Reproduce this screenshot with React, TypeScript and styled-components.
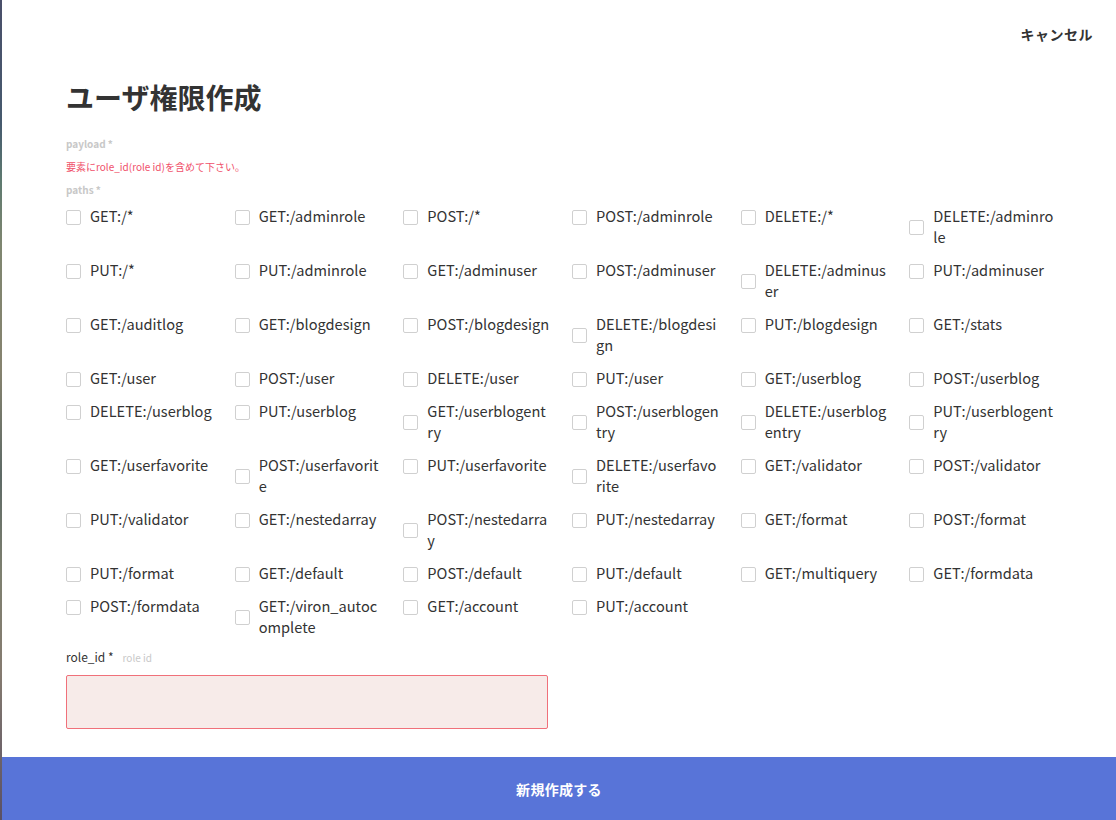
import React from "react";
import styled, { createGlobalStyle } from "styled-components";

const GlobalStyle = createGlobalStyle`
  html, body { margin: 0; padding: 0; background: #fff; }
  body { font-family: "Noto Sans CJK JP", "Noto Sans", sans-serif; color: #333; }
  * { box-sizing: border-box; }
`;

const Page = styled.div`
  display: flex;
  width: 1116px;
  height: 820px;
  overflow: hidden;
`;

const Backdrop = styled.div`
  width: 2px;
  flex: none;
  background: linear-gradient(
    to bottom,
    #4a4f6a 0%,
    #465a6e 15%,
    #5e7a70 22%,
    #7f8670 30%,
    #86836f 45%,
    #5e6a66 58%,
    #7e8070 70%,
    #857b70 82%,
    #5a5064 100%
  );
`;

const Panel = styled.div`
  flex: 1;
  display: flex;
  flex-direction: column;
  background: #fff;
`;

const Header = styled.div`
  height: 68px;
  display: flex;
  justify-content: flex-end;
  align-items: center;
  padding-right: 23px;
`;

const Cancel = styled.span`
  font-size: 14px;
  font-weight: 700;
  color: #333;
  letter-spacing: 0.5px;
  cursor: pointer;
`;

const Body = styled.div`
  flex: 1;
  padding: 0 38px 0 64px;
`;

const Title = styled.h1`
  margin: 15px 0 26px;
  font-size: 28px;
  line-height: 28px;
  font-weight: 700;
  color: #333;
`;

const FieldLabel = styled.div`
  font-size: 10px;
  line-height: 14px;
  font-weight: 700;
  color: #c8c8c8;
`;

const ErrorText = styled.div`
  margin: 9px 0;
  font-size: 10px;
  line-height: 14px;
  color: #f0506a;
`;

const Grid = styled.div`
  margin-top: 8px;
  display: grid;
  grid-template-columns: repeat(6, 1fr);
  align-items: start;
`;

const Item = styled.label`
  display: flex;
  align-items: center;
  margin-bottom: 12px;
  padding-right: 21px;
  cursor: pointer;
`;

const Box = styled.span`
  flex: none;
  width: 15px;
  height: 15px;
  margin-top: 3px;
  border: 1px solid #d0d0d0;
  border-radius: 2px;
  background: #fff;
  margin-right: 9px;
`;

const ItemText = styled.span`
  flex: 1;
  min-width: 0;
  font-size: 14.6px;
  line-height: 21px;
  color: #333;
  word-break: break-all;
`;

const RoleRow = styled.div`
  display: flex;
  align-items: baseline;
  gap: 9px;
  line-height: 16px;
`;

const RoleLabel = styled.span`
  font-size: 12px;
  color: #333;
`;

const RoleHint = styled.span`
  font-size: 10px;
  color: #c8c8c8;
`;

const Input = styled.div`
  margin-top: 9px;
  width: 482px;
  height: 54px;
  background: #f7ebe9;
  border: 1px solid #f0707a;
  border-radius: 2px;
`;

const Footer = styled.div`
  height: 63px;
  flex: none;
  background: #5874d8;
  display: flex;
  align-items: center;
  justify-content: center;
  color: #fff;
  font-size: 14px;
  font-weight: 700;
  letter-spacing: 0.3px;
`;

const paths = [
  "GET:/*", "GET:/adminrole", "POST:/*", "POST:/adminrole", "DELETE:/*", "DELETE:/adminrole",
  "PUT:/*", "PUT:/adminrole", "GET:/adminuser", "POST:/adminuser", "DELETE:/adminuser", "PUT:/adminuser",
  "GET:/auditlog", "GET:/blogdesign", "POST:/blogdesign", "DELETE:/blogdesign", "PUT:/blogdesign", "GET:/stats",
  "GET:/user", "POST:/user", "DELETE:/user", "PUT:/user", "GET:/userblog", "POST:/userblog",
  "DELETE:/userblog", "PUT:/userblog", "GET:/userblogentry", "POST:/userblogentry", "DELETE:/userblogentry", "PUT:/userblogentry",
  "GET:/userfavorite", "POST:/userfavorite", "PUT:/userfavorite", "DELETE:/userfavorite", "GET:/validator", "POST:/validator",
  "PUT:/validator", "GET:/nestedarray", "POST:/nestedarray", "PUT:/nestedarray", "GET:/format", "POST:/format",
  "PUT:/format", "GET:/default", "POST:/default", "PUT:/default", "GET:/multiquery", "GET:/formdata",
  "POST:/formdata", "GET:/viron_autocomplete", "GET:/account", "PUT:/account",
];

export default function App() {
  return (
    <>
      <GlobalStyle />
      <Page>
        <Backdrop />
        <Panel>
          <Header>
            <Cancel>キャンセル</Cancel>
          </Header>
          <Body>
            <Title>ユーザ権限作成</Title>
            <FieldLabel>payload *</FieldLabel>
            <ErrorText>要素にrole_id(role id)を含めて下さい。</ErrorText>
            <FieldLabel>paths *</FieldLabel>
            <Grid>
              {paths.map((p) => (
                <Item key={p}>
                  <Box />
                  <ItemText>{p}</ItemText>
                </Item>
              ))}
            </Grid>
            <RoleRow>
              <RoleLabel>role_id *</RoleLabel>
              <RoleHint>role id</RoleHint>
            </RoleRow>
            <Input />
          </Body>
          <Footer>新規作成する</Footer>
        </Panel>
      </Page>
    </>
  );
}
